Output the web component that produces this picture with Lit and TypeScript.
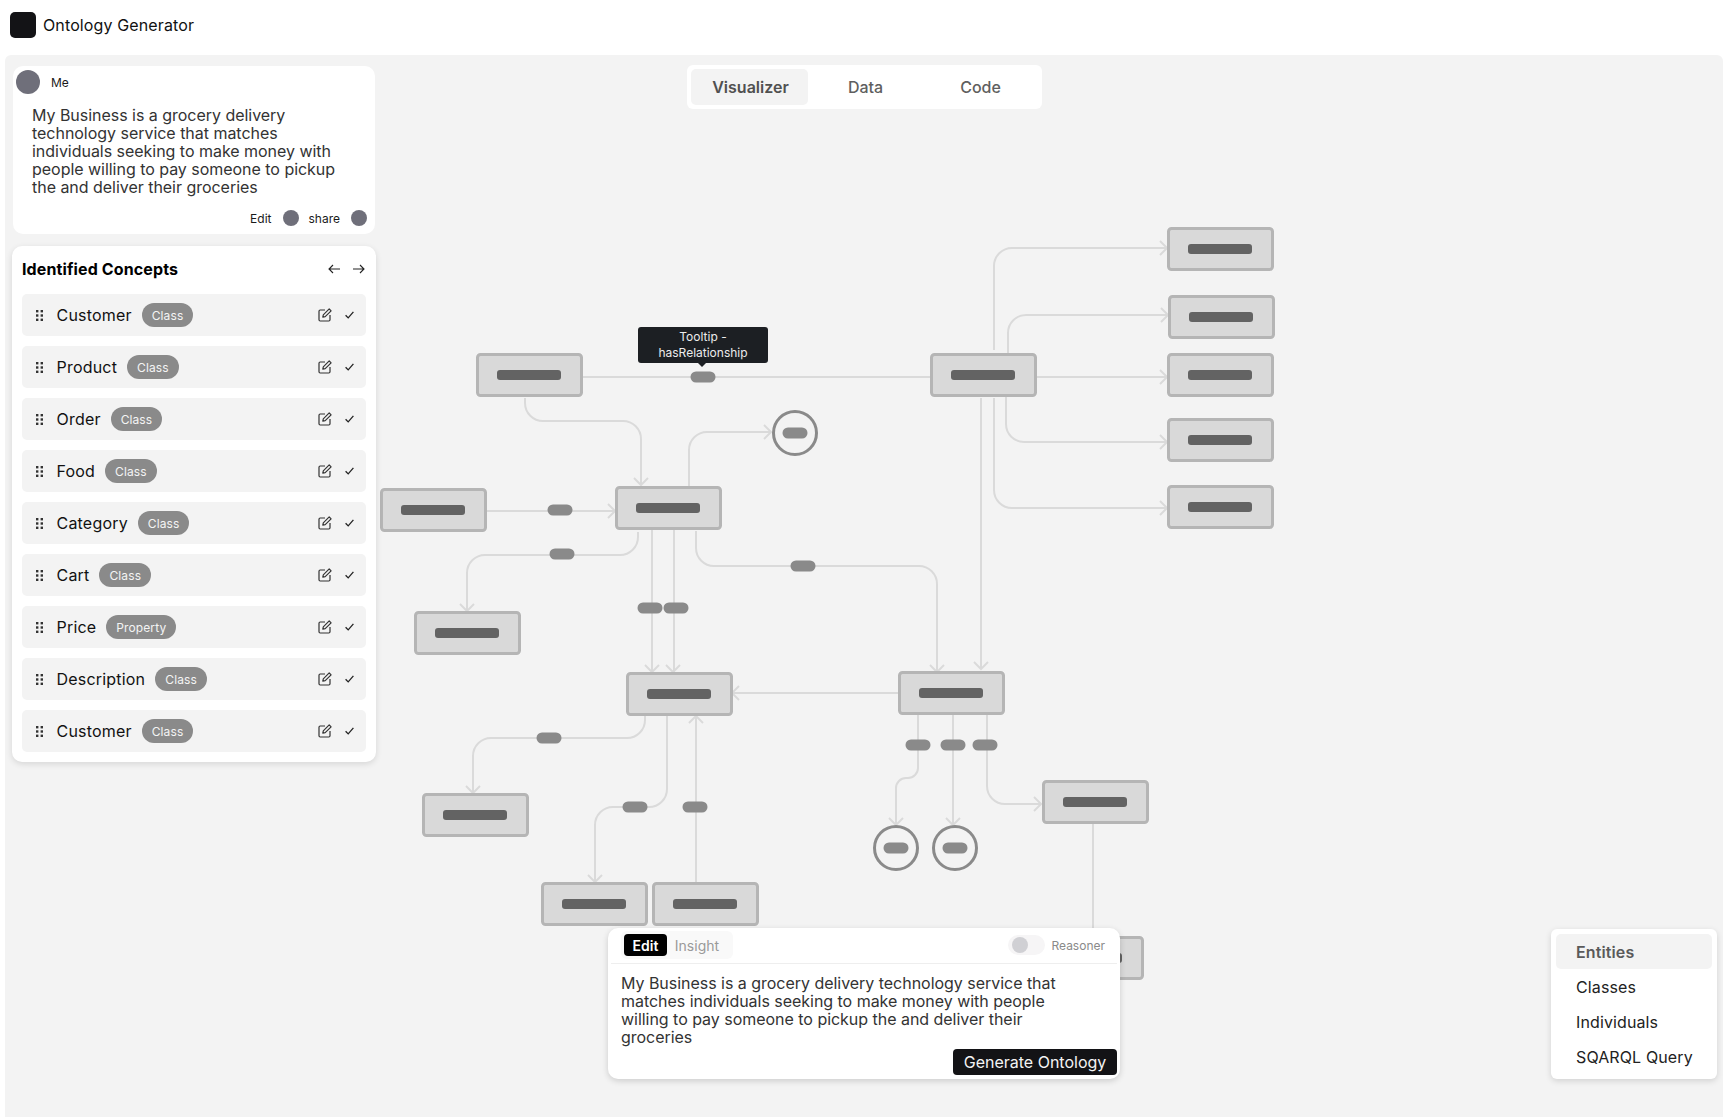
import {LitElement, html, css, svg} from 'lit';
import {customElement} from 'lit/decorators.js';

// main panel origin on the page, diagram coords below are page coords
const NODES = [
  [476, 353], [615, 486], [380, 488], [414, 611], [626, 672], [930, 353],
  [1167, 227], [1168, 295], [1167, 353], [1167, 418], [1167, 485],
  [898, 671], [1042, 780], [1037, 936], [422, 793], [541, 882], [652, 882],
];
const CIRCLES = [[795, 433], [896, 848], [955, 848]];
const PILLS = [
  [703, 377], [560, 510], [562, 554], [650, 608], [676, 608], [803, 566],
  [549, 738], [635, 807], [695, 807], [918, 745], [953, 745], [985, 745],
];
const EDGES = [
  'M582 377H932',
  'M525 398V403A18 18 0 0 0 543 421H623A18 18 0 0 1 641 439V484',
  'M689 486V450A18 18 0 0 1 707 432H771',
  'M486 511H615',
  'M638 532V537A18 18 0 0 1 620 555H485A18 18 0 0 0 467 573V610',
  'M652 530V672',
  'M674 530V672',
  'M696 531V548A18 18 0 0 0 714 566H919A18 18 0 0 1 937 584V671',
  'M981 398V668',
  'M994 398V490A18 18 0 0 0 1012 508H1167',
  'M1006 397V424A18 18 0 0 0 1024 442H1167',
  'M1037 377H1167',
  'M994 350V266A18 18 0 0 1 1012 248H1167',
  'M1008 353V333A18 18 0 0 1 1026 315H1167',
  'M898 693H733',
  'M645 715V720A18 18 0 0 1 627 738H491A18 18 0 0 0 473 756V792',
  'M667 715V789A18 18 0 0 1 649 807H613A18 18 0 0 0 595 825V882',
  'M696 882V717',
  'M918 715V768A10 10 0 0 1 908 778H906A10 10 0 0 0 896 788V824',
  'M953 715V824',
  'M987 715V786A18 18 0 0 0 1005 804H1041',
  'M1093 824V928',
];
const ARROWS = [
  'M634 478L641 485L648 478', 'M764 425L771 432L764 439', 'M608 504L615 511L608 518',
  'M460 604L467 611L474 604', 'M645 665L652 672L659 665', 'M666 665L673 672L680 665',
  'M930 665L937 672L944 665', 'M974 662L981 669L988 662',
  'M1160 241L1167 248L1160 255', 'M1161 308L1168 315L1161 322', 'M1160 370L1167 377L1160 384',
  'M1160 435L1167 442L1160 449', 'M1160 501L1167 508L1160 515',
  'M739 686L732 693L739 700', 'M466 786L473 793L480 786', 'M588 875L595 882L602 875',
  'M689 723L696 716L703 723', 'M889 818L896 825L903 818', 'M946 818L953 825L960 818',
  'M1034 797L1041 804L1034 811',
];

const CONCEPTS = [
  ['Customer', 'Class'], ['Product', 'Class'], ['Order', 'Class'], ['Food', 'Class'],
  ['Category', 'Class'], ['Cart', 'Class'], ['Price', 'Property'], ['Description', 'Class'],
  ['Customer', 'Class'],
];

@customElement('app-root')
export class AppRoot extends LitElement {
  static override styles = css`
    :host {
      display: block;
      width: 1728px;
      height: 1117px;
      overflow: hidden;
      background: #fff;
      font-family: Inter, 'Liberation Sans', sans-serif;
      color: #1a1a1a;
    }
    .header {
      height: 55px;
      display: flex;
      align-items: center;
      gap: 7px;
      padding-left: 10px;
      padding-bottom: 5px;
      box-sizing: border-box;
      font-size: 16px;
      letter-spacing: 0.12px;
      color: #111;
    }
    .logo {
      width: 26px;
      height: 26px;
      border-radius: 5px;
      background: #131316;
    }
    .main {
      position: relative;
      margin: 0 5px;
      height: 1062px;
      background: #f3f3f3;
      border-radius: 6px 6px 0 0;
      display: grid;
      grid-template-columns: 372px 1fr 172px;
    }
    .canvas {
      position: absolute;
      left: -5px;
      top: -55px;
      width: 1728px;
      height: 1117px;
    }
    .side {
      position: relative;
      padding: 11px 0 0 7px;
      display: flex;
      flex-direction: column;
      gap: 12px;
    }
    .chat {
      width: 362px;
      height: 168px;
      margin-left: 1px;
      box-sizing: border-box;
      background: #fff;
      border-radius: 10px;
      padding: 4px 8px 0 3px;
      display: flex;
      flex-direction: column;
    }
    .me {
      display: flex;
      align-items: center;
      gap: 11px;
      font-size: 12px;
    }
    .dot {
      background: #6f6f7a;
      border-radius: 50%;
      flex: none;
    }
    .me .dot { width: 24px; height: 24px; }
    .chat p {
      margin: 12px 30px 0 16px;
      font-size: 16px;
      line-height: 18px;
      letter-spacing: -0.03px;
      color: #333;
    }
    .chat-foot {
      margin-top: 14px;
      display: flex;
      justify-content: flex-end;
      align-items: center;
      font-size: 12px;
    }
    .chat-foot .dot { width: 16px; height: 16px; margin: 0 0 0 11px; }
    .chat-foot .share { margin-left: 10px; }
    .concepts {
      width: 364px;
      height: 516px;
      box-sizing: border-box;
      background: #fff;
      border-radius: 10px;
      box-shadow: 0 2px 6px rgba(0, 0, 0, 0.12);
      padding: 10px;
    }
    .concepts-head {
      height: 26px;
      margin-bottom: 12px;
      display: flex;
      align-items: center;
      justify-content: space-between;
      font-size: 16px;
      font-weight: 700;
      letter-spacing: 0.12px;
      color: #000;
    }
    .arrows { display: flex; gap: 13px; margin-right: 1px; }
    .arrows svg { display: block; }
    .rows { display: flex; flex-direction: column; gap: 10px; }
    .row {
      height: 42px;
      background: #f3f3f3;
      border-radius: 5px;
      display: flex;
      align-items: center;
      padding: 0 12px 0 14px;
      font-size: 16px;
      letter-spacing: 0.2px;
      color: #111;
    }
    .grip { margin-right: 13.5px; display: block; }
    .badge {
      margin-left: 10px;
      height: 24px;
      padding: 0 10px;
      display: flex;
      align-items: center;
      border-radius: 12px;
      background: #8a8a8a;
      color: #f4f4f4;
      font-size: 12px;
      letter-spacing: 0.1px;
    }
    .row-icons {
      margin-left: auto;
      display: flex;
      align-items: center;
      gap: 13px;
    }
    .row-icons svg { display: block; }
    .center {
      position: relative;
      display: flex;
      flex-direction: column;
      justify-content: space-between;
      align-items: flex-start;
    }
    .tabs {
      margin: 10px 0 0 310px;
      width: 355px;
      height: 44px;
      box-sizing: border-box;
      padding: 4px;
      background: #fff;
      border-radius: 6px;
      display: flex;
      font-size: 16px;
      font-weight: 600;
      color: #5f5f5f;
    }
    .tab {
      flex: 1 1 0;
      box-sizing: border-box;
      display: flex;
      align-items: center;
      justify-content: center;
      border-radius: 5px;
    }
    .tab.on { background: #f3f3f3; color: #505050; padding-left: 2px; }
    .tab.off { font-weight: 500; }
    .panel {
      margin: 0 0 38px 231px;
      width: 512px;
      height: 151px;
      box-sizing: border-box;
      background: #fff;
      border-radius: 10px;
      box-shadow: 0 2px 6px rgba(0, 0, 0, 0.16);
      padding: 3px;
    }
    .panel-head {
      height: 33px;
      box-sizing: border-box;
      padding: 0 12px 0 10px;
      border-bottom: 1px solid #eeeeee;
      display: flex;
      align-items: flex-start;
      justify-content: space-between;
    }
    .seg {
      height: 28px;
      box-sizing: border-box;
      padding: 3px;
      background: #f9f9f9;
      border-radius: 6px;
      display: flex;
      align-items: center;
      font-size: 14px;
      color: #9a9a9a;
    }
    .seg b {
      height: 22px;
      padding: 0 8.5px;
      margin-right: 8px;
      display: flex;
      align-items: center;
      background: #000;
      color: #fff;
      border-radius: 4px;
      font-weight: 600;
    }
    .seg span { margin-right: 11px; }
    .reasoner {
      display: flex;
      align-items: center;
      gap: 6px;
      height: 28px;
      font-size: 12px;
      color: #8a8a8a;
    }
    .toggle {
      width: 37px;
      height: 20px;
      border-radius: 10px;
      background: #f6f5f6;
      display: flex;
      align-items: center;
      padding-left: 4px;
      box-sizing: border-box;
    }
    .toggle i {
      width: 16px;
      height: 16px;
      border-radius: 50%;
      background: #d0d0d4;
    }
    .panel p {
      margin: 10px 40px 0 10px;
      font-size: 16px;
      line-height: 18px;
      letter-spacing: -0.03px;
      color: #333;
    }
    .panel-foot { display: flex; justify-content: flex-end; margin-top: 3px; }
    .generate {
      height: 26px;
      width: 164px;
      border-radius: 4px;
      background: #131316;
      color: #f4f4f4;
      font-size: 16px;
      display: flex;
      align-items: center;
      justify-content: center;
    }
    .menu {
      position: relative;
      align-self: end;
      margin: 0 6px 38px 0;
      width: 166px;
      height: 150px;
      box-sizing: border-box;
      padding: 5px;
      background: #fff;
      border-radius: 6px;
      box-shadow: 0 2px 6px rgba(0, 0, 0, 0.14);
      font-size: 16px;
      letter-spacing: 0.12px;
      color: #222;
    }
    .menu div {
      height: 35px;
      padding-left: 20px;
      display: flex;
      align-items: center;
      border-radius: 5px;
    }
    .menu .on { background: #f3f3f3; color: #5a5a5a; font-weight: 600; }
    .edge { fill: none; stroke: #dadada; stroke-width: 2; }
    .node { fill: #d9d9d9; stroke: #b5b5b5; stroke-width: 3; }
    .bar { fill: #636363; }
    .pill { fill: #8a8a8a; }
    .ring { fill: none; stroke: #8a8a8a; stroke-width: 3; }
    .tooltip {
      position: absolute;
      left: 633px;
      top: 272px;
      width: 130px;
      height: 36px;
      box-sizing: border-box;
      border-radius: 3px;
      background: #1c1f23;
      color: #ececec;
      font-size: 12px;
      line-height: 16px;
      text-align: center;
      padding-top: 2px;
    }
    .tooltip::after {
      content: '';
      position: absolute;
      left: 60px;
      bottom: -4px;
      border: 4px solid transparent;
      border-bottom: 0;
      border-top-color: #1c1f23;
    }
  `;

  private diagram() {
    return html`<svg class="canvas" viewBox="0 0 1728 1117">
      ${EDGES.map((d) => svg`<path class="edge" d=${d}></path>`)}
      ${ARROWS.map((d) => svg`<path class="edge" d=${d}></path>`)}
      ${NODES.map(([x, y]) => svg`
        <rect class="node" x=${x + 1.5} y=${y + 1.5} width="104" height="41" rx="3"></rect>
        <rect class="bar" x=${x + 21} y=${y + 17} width="64" height="10" rx="3"></rect>`)}
      ${CIRCLES.map(([x, y]) => svg`
        <circle class="ring" cx=${x} cy=${y} r="21.5"></circle>
        <rect class="pill" x=${x - 12.5} y=${y - 5.5} width="25" height="11" rx="5.5"></rect>`)}
      ${PILLS.map(([x, y]) => svg`
        <rect class="pill" x=${x - 12.5} y=${y - 5.5} width="25" height="11" rx="5.5"></rect>`)}
    </svg>`;
  }

  private grip() {
    return html`<svg class="grip" width="7" height="11" viewBox="0 0 7 11" fill="#333">
      <rect x="0" y="0" width="2.4" height="2.4"></rect><rect x="4.6" y="0" width="2.4" height="2.4"></rect>
      <rect x="0" y="4.3" width="2.4" height="2.4"></rect><rect x="4.6" y="4.3" width="2.4" height="2.4"></rect>
      <rect x="0" y="8.6" width="2.4" height="2.4"></rect><rect x="4.6" y="8.6" width="2.4" height="2.4"></rect>
    </svg>`;
  }

  private rowIcons() {
    return html`<div class="row-icons">
      <svg width="14" height="14" viewBox="0 0 14 14" fill="none" stroke="#333" stroke-width="1.2" stroke-linejoin="round">
        <path d="M7 2H2.2A1.2 1.2 0 0 0 1 3.2V11.8A1.2 1.2 0 0 0 2.2 13H10.8A1.2 1.2 0 0 0 12 11.8V7"></path>
        <path d="M11.2 0.9L13.1 2.8L7.2 8.7L4.8 9.2L5.3 6.8Z"></path>
      </svg>
      <svg width="9" height="8" viewBox="0 0 9 8" fill="none" stroke="#222" stroke-width="1.3">
        <path d="M0.6 4.2L3.2 6.9L8.4 0.8"></path>
      </svg>
    </div>`;
  }

  override render() {
    return html`
      <div class="header"><div class="logo"></div><span>Ontology Generator</span></div>
      <div class="main">
        ${this.diagram()}
        <div class="tooltip">Tooltip -<br />hasRelationship</div>
        <div class="side">
          <div class="chat">
            <div class="me"><span class="dot"></span>Me</div>
            <p>My Business is a grocery delivery technology service that matches individuals seeking to make money with people willing to pay someone to pickup the and deliver their groceries</p>
            <div class="chat-foot">
              <span>Edit</span><span class="dot"></span>
              <span class="share">share</span><span class="dot"></span>
            </div>
          </div>
          <div class="concepts">
            <div class="concepts-head">
              <span>Identified Concepts</span>
              <div class="arrows">
                <svg width="12" height="10" viewBox="0 0 12 10" fill="none" stroke="#222" stroke-width="1.1"><path d="M12 5H1M5 1L1 5L5 9"></path></svg>
                <svg width="12" height="10" viewBox="0 0 12 10" fill="none" stroke="#222" stroke-width="1.1"><path d="M0 5H11M7 1L11 5L7 9"></path></svg>
              </div>
            </div>
            <div class="rows">
              ${CONCEPTS.map(([name, kind]) => html`
                <div class="row">
                  ${this.grip()}<span>${name}</span><span class="badge">${kind}</span>
                  ${this.rowIcons()}
                </div>`)}
            </div>
          </div>
        </div>
        <div class="center">
          <div class="tabs">
            <div class="tab on">Visualizer</div>
            <div class="tab off">Data</div>
            <div class="tab off">Code</div>
          </div>
          <div class="panel">
            <div class="panel-head">
              <div class="seg"><b>Edit</b><span>Insight</span></div>
              <div class="reasoner"><div class="toggle"><i></i></div>Reasoner</div>
            </div>
            <p>My Business is a grocery delivery technology service that matches individuals seeking to make money with people willing to pay someone to pickup the and deliver their groceries</p>
            <div class="panel-foot"><div class="generate">Generate Ontology</div></div>
          </div>
        </div>
        <div class="menu">
          <div class="on">Entities</div>
          <div>Classes</div>
          <div>Individuals</div>
          <div>SQARQL Query</div>
        </div>
      </div>
    `;
  }
}
